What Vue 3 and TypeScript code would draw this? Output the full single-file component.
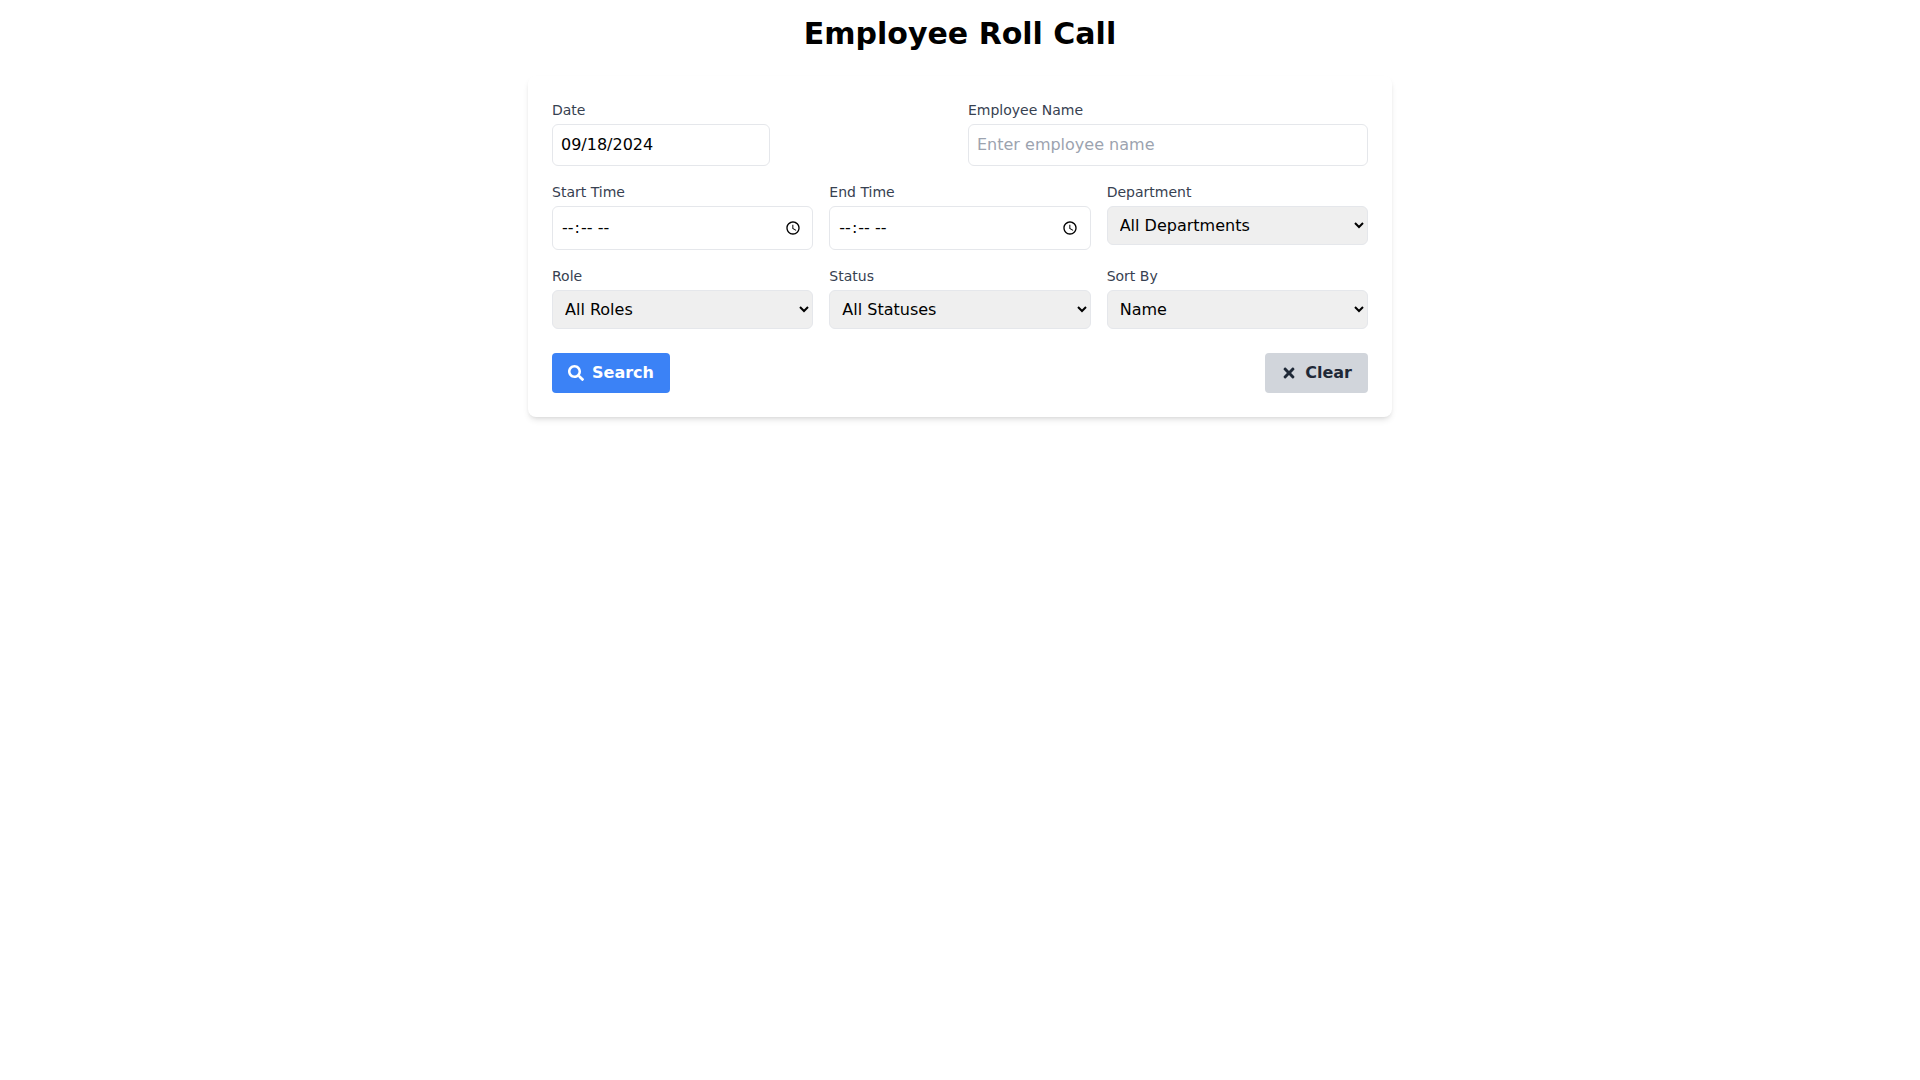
<script setup lang="ts">
import { reactive } from 'vue'

interface Filters {
  date: string
  name: string
  startTime: string
  endTime: string
  department: string
  role: string
  status: string
  sortBy: string
}

const defaults: Filters = {
  date: '09/18/2024',
  name: '',
  startTime: '',
  endTime: '',
  department: '',
  role: '',
  status: '',
  sortBy: 'name',
}

const filters = reactive<Filters>({ ...defaults })

function clearFilters(): void {
  Object.assign(filters, defaults)
}
</script>

<template>
  <main class="page">
    <h1 class="title">Employee Roll Call</h1>
    <form class="card" @submit.prevent>
      <div class="grid two">
        <div class="field">
          <label for="date">Date</label>
          <input id="date" v-model="filters.date" class="control natural" type="text" />
        </div>
        <div class="field">
          <label for="name">Employee Name</label>
          <input id="name" v-model="filters.name" class="control" type="text" placeholder="Enter employee name" />
        </div>
      </div>
      <div class="grid three">
        <div class="field">
          <label for="start">Start Time</label>
          <input id="start" v-model="filters.startTime" class="control" type="time" />
        </div>
        <div class="field">
          <label for="end">End Time</label>
          <input id="end" v-model="filters.endTime" class="control" type="time" />
        </div>
        <div class="field">
          <label for="department">Department</label>
          <select id="department" v-model="filters.department" class="control select">
            <option value="">All Departments</option>
          </select>
        </div>
        <div class="field">
          <label for="role">Role</label>
          <select id="role" v-model="filters.role" class="control select">
            <option value="">All Roles</option>
          </select>
        </div>
        <div class="field">
          <label for="status">Status</label>
          <select id="status" v-model="filters.status" class="control select">
            <option value="">All Statuses</option>
          </select>
        </div>
        <div class="field">
          <label for="sort">Sort By</label>
          <select id="sort" v-model="filters.sortBy" class="control select">
            <option value="name">Name</option>
          </select>
        </div>
      </div>
      <div class="actions">
        <button class="button primary" type="submit">
          <svg class="icon" viewBox="0 0 512 512" aria-hidden="true">
            <path d="M505 442.7L405.3 343c-4.5-4.5-10.6-7-17-7H372c27.6-35.3 44-79.7 44-128C416 93.1 322.9 0 208 0S0 93.1 0 208s93.1 208 208 208c48.3 0 92.7-16.4 128-44v16.3c0 6.4 2.5 12.5 7 17l99.7 99.7c9.4 9.4 24.6 9.4 33.9 0l28.3-28.3c9.4-9.4 9.4-24.6.1-34zM208 336c-70.7 0-128-57.2-128-128 0-70.7 57.2-128 128-128 70.7 0 128 57.2 128 128 0 70.7-57.2 128-128 128z" />
          </svg>
          Search
        </button>
        <button class="button secondary" type="button" @click="clearFilters">
          <svg class="icon" viewBox="0 0 352 512" aria-hidden="true">
            <path d="M242.72 256l100.07-100.07c12.28-12.28 12.28-32.19 0-44.48l-22.24-22.24c-12.28-12.28-32.19-12.28-44.48 0L176 189.28 75.93 89.21c-12.28-12.28-32.19-12.28-44.48 0L9.21 111.45c-12.28 12.28-12.28 32.19 0 44.48L109.28 256 9.21 356.07c-12.28 12.28-12.28 32.19 0 44.48l22.24 22.24c12.28 12.28 32.2 12.28 44.48 0L176 322.72l100.07 100.07c12.28 12.28 32.2 12.28 44.48 0l22.24-22.24c12.28-12.28 12.28-32.19 0-44.48L242.72 256z" />
          </svg>
          Clear
        </button>
      </div>
    </form>
  </main>
</template>

<style scoped>
*,
*::before,
*::after {
  box-sizing: border-box;
}

.page {
  max-width: 896px;
  margin: 0 auto;
  padding: 16px;
  font-family: 'DejaVu Sans', sans-serif;
  font-size: 16px;
  line-height: 24px;
  color: #000;
}

.title {
  margin: 0 0 24px;
  font-size: 30px;
  line-height: 36px;
  font-weight: 700;
  text-align: center;
}

.card {
  padding: 24px;
  background: #fff;
  border-radius: 8px;
  box-shadow: 0 4px 6px -1px rgba(0, 0, 0, 0.1), 0 2px 4px -2px rgba(0, 0, 0, 0.1);
}

.grid {
  display: grid;
  gap: 16px;
}

.two {
  grid-template-columns: repeat(2, minmax(0, 1fr));
  margin-bottom: 16px;
}

.three {
  grid-template-columns: repeat(3, minmax(0, 1fr));
}

.field label {
  display: block;
  margin-bottom: 4px;
  font-size: 14px;
  line-height: 20px;
  color: #374151;
}

.control {
  display: block;
  width: 100%;
  margin: 0;
  padding: 8px;
  font: inherit;
  color: #000;
  background-color: #fff;
  border: 1px solid #e5e7eb;
  border-radius: 6px;
}

.natural {
  width: auto;
}

.control::placeholder {
  color: #9ca3af;
  opacity: 1;
}

.select {
  background-color: #efefef;
}

.actions {
  display: flex;
  justify-content: space-between;
  margin-top: 24px;
}

.button {
  display: flex;
  align-items: center;
  gap: 8px;
  margin: 0;
  padding: 8px 16px;
  font: inherit;
  font-weight: 700;
  border: 0;
  border-radius: 4px;
  cursor: pointer;
}

.primary {
  color: #fff;
  background: #3b82f6;
}

.secondary {
  color: #1f2937;
  background: #d1d5db;
}

.icon {
  width: 16px;
  height: 16px;
  fill: currentColor;
}
</style>

<style>
body {
  margin: 0;
  background: #fff;
}
</style>
